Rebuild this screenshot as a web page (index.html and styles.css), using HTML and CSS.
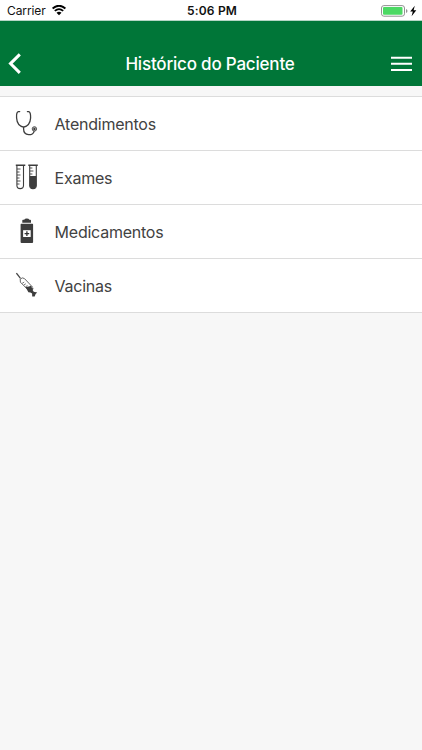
FILE: index.html
```html
<!DOCTYPE html>
<html lang="pt-BR">
<head>
<meta charset="utf-8">
<title>Histórico do Paciente</title>
<link rel="stylesheet" href="styles.css">
</head>
<body>
<div class="status">
  <div class="carrier"><span class="carrier-name">Carrier</span>
    <svg class="wifi" width="14" height="11" viewBox="0 0 14 11"><path d="M.6 3.5Q7-2.1 13.4 3.5M2.8 5.9Q7 2.3 11.2 5.9" fill="none" stroke="#000" stroke-width="1.8"/><path d="M4.5 7.7Q7 5.8 9.5 7.7L7 10.3Z"/></svg>
  </div>
  <span class="time">5:06 PM</span>
  <div class="power">
    <svg width="36" height="12" viewBox="0 0 36 12"><rect x=".5" y=".6" width="23" height="10.6" rx="2.4" fill="#fff" stroke="#929292"/><rect x="2" y="2.1" width="19.5" height="7.6" rx="1" fill="#4cd964"/><path d="M25 4.1Q26.5 4.5 26.5 6T25 7.9Z" fill="#929292"/><path d="M33.8.8 29.2 6.5h2.6l-1.2 4.7 4.7-6h-2.7Z"/></svg>
  </div>
</div>
<header class="navbar">
  <svg class="back" width="14" height="22" viewBox="0 0 14 22"><path d="M11.8 1.4 2.5 10.6l9.3 9.3" fill="none" stroke="#fff" stroke-width="3"/></svg>
  <h1 class="title">Histórico do Paciente</h1>
  <svg class="menu" width="21" height="16" viewBox="0 0 21 16"><path d="M0 1.7h21M0 7.7h21M0 13.9h21" stroke="#fff" stroke-width="2"/></svg>
</header>
<ul class="list">
  <li class="row">
    <svg class="icon" viewBox="13 110 28 28"><g fill="none" stroke="#3d3d3d" stroke-width="1.3" stroke-linecap="round"><path d="M19.7 111.6h-1.4C16.7 112 16.4 115 16.6 118c.3 4.8 3.1 8.3 7 9.2 4-.9 6.7-4.4 7-9.2.1-3-.3-6-1.8-6.4h-1.4"/><path d="M23.6 127.2v1.8c0 7.4 9.8 7.2 10.6 1.8"/></g><circle cx="34.4" cy="128.9" r="2.2" fill="#aaa" stroke="#555" stroke-width="1"/><circle cx="34.4" cy="128.9" r="1" fill="#333"/></svg>
    <span>Atendimentos</span>
  </li>
  <li class="row">
    <svg class="icon" viewBox="13 164 28 28"><g fill="none" stroke="#3d3d3d"><path d="M15.8 165.3h9.5M28.3 165.3h9.5" stroke-width="1.5"/><path d="M16.9 166v19.5c0 4.1 6.6 4.1 6.6 0V166M29.7 166v19.5c0 4.1 6.6 4.1 6.6 0V166" stroke-width="1.1"/><path d="M17 169h3.5M17 172h2.5M17 175h3.5M17 178h2.5M17 181h3.5M17 184h2.5M30 168h2.4M30 171h3.4M30 174h2.4" stroke-width=".9"/></g><path d="M29.7 176h6.6v9.5c0 4.1-6.6 4.1-6.6 0Z" fill="#3d3d3d"/></svg>
    <span>Exames</span>
  </li>
  <li class="row">
    <svg class="icon" viewBox="13 218 28 28"><path d="M22.3 222.8v-2.4q0-.6.7-.7h1.2q.6-1.1 2.6-1.1t2.6 1.1h.8q.8.1.8.7v2.4ZM21.3 223.7h11.1q.7 0 .7.7v17.7q0 .9-.9.9H21.5q-.9 0-.9-.9v-17.7q0-.7.7-.7Z" fill="#3d3d3d"/><path d="M23.1 230.2h7.6v6.8h-7.6Z" fill="#fff"/><path d="M26.9 231.3v4.6M24.6 233.6h4.6" stroke="#333" stroke-width="1.3"/></svg>
    <span>Medicamentos</span>
  </li>
  <li class="row">
    <svg class="icon" viewBox="13 272 28 28"><path d="m16.4 273.1 3.9 5" fill="none" stroke="#444" stroke-width="1.3"/><path d="m20.2 278.9 2.4-1 2 .8 8 8.5-3.8 3.4-8.4-8.4Z" fill="#fff" stroke="#555" stroke-width=".9"/><path d="m25.5 287 3.4-.5 2.2-.8.8 2.2 1.8.7-1.1 1.5 1.1 1.6 3.5.8-1.6 1.4-.9 2.7-2.5-.1-.1-3-1.7-1.1-2-.2Z" fill="#3d3d3d"/><path d="m22.2 283.3 2-1.2m-.4 2.9 2-1.2m-.3 3 2-1.2" stroke="#555" stroke-width=".8"/></svg>
    <span>Vacinas</span>
  </li>
</ul>
</body>
</html>
```
FILE: styles.css
```css
* { box-sizing: border-box; }
body { margin: 0; min-height: 750px; background: #f7f7f7; font-family: Inter, sans-serif; color: #424242; }
svg { display: block; flex: none; }
.status { height: 21px; display: grid; grid-template-columns: 1fr auto 1fr; align-items: center; background: #fff; color: #111; padding: 1px 5px 0 7px; border-bottom: 1px solid #b5d6c5; }
.carrier { display: flex; align-items: center; gap: 6px; }
.carrier-name { font-size: 12px; letter-spacing: -.1px; }
.time { font-size: 12px; font-weight: 600; letter-spacing: .2px; }
.power { display: flex; justify-content: flex-end; }
.navbar { height: 65px; background: #007638; padding: 20px 10px 0 8px; display: grid; grid-template-columns: 40px 1fr 40px; align-items: center; }
.title { margin: 0; text-align: center; font-size: 17px; line-height: 24px; font-weight: 500; letter-spacing: -.2px; color: #fff; }
.menu { justify-self: end; }
.list { list-style: none; margin: 10px 0 0; padding: 0; border-top: 1px solid #dcdcdc; background: #fff; }
.row { height: 54px; display: flex; align-items: center; gap: 13.6px; padding: 0 13px; border-bottom: 1px solid #dcdcdc; font-size: 16px; letter-spacing: -.24px; }
.icon { width: 28px; height: 28px; }
```
